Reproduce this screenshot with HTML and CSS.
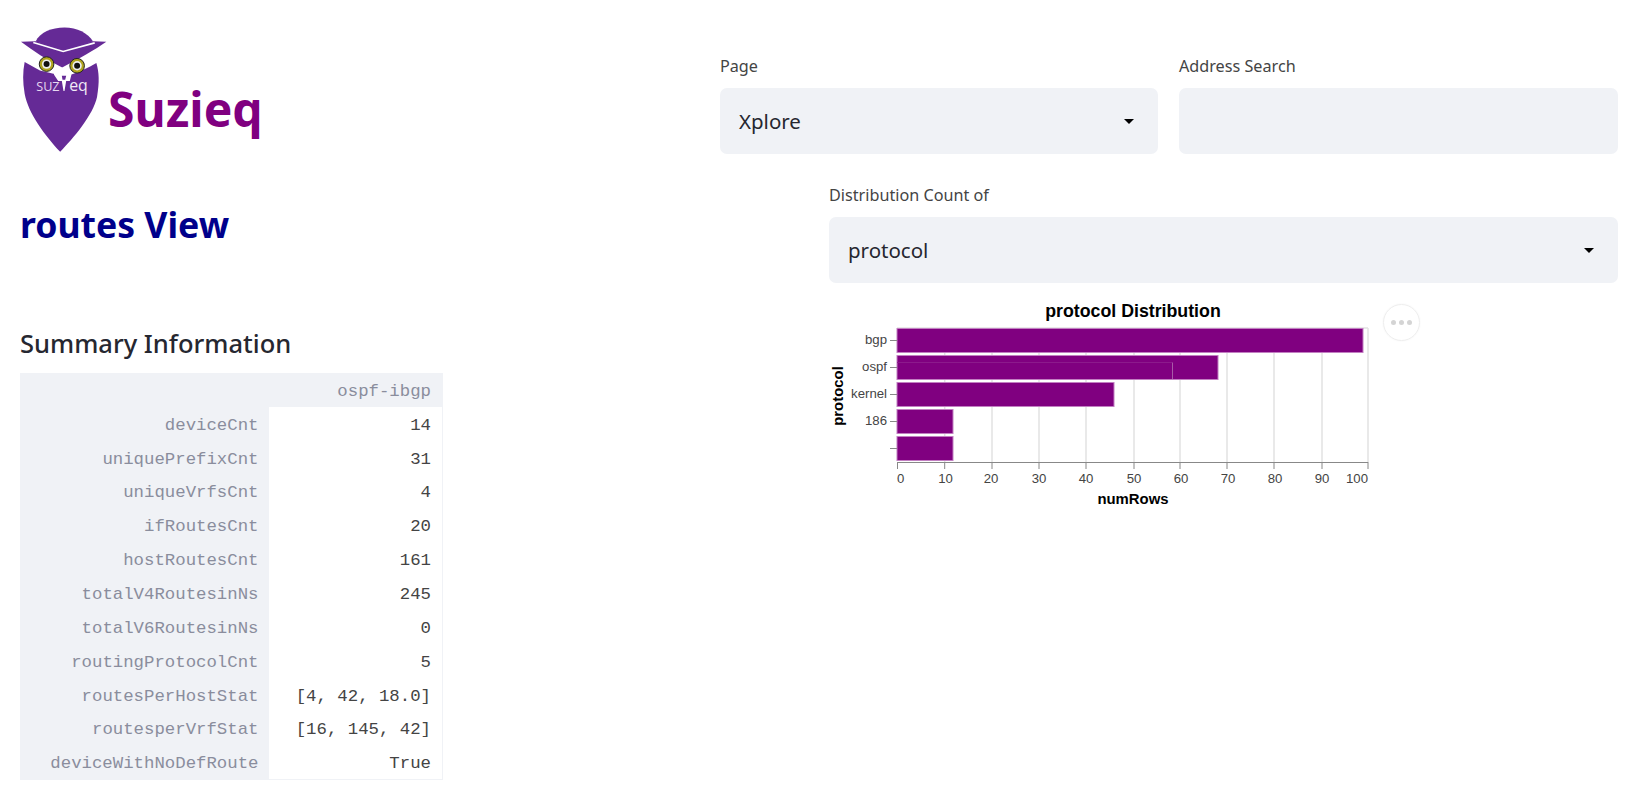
FILE: index.html
```html
<!DOCTYPE html>
<html lang="en">
<head>
    <meta charset="UTF-8">
    <meta name="viewport" content="width=device-width, initial-scale=1.0">
    <title>Suzieq</title>
    <link rel="stylesheet" href="styles.css">
</head>
<body>
    <div class="main">
        <div class="top-row">
            <div class="brand">
                <svg class="logo" viewBox="60 50 262 378" width="87" height="126">
                    <path class="logo-purple" d="M74 155 L120 180 L170 192 L215 192 C240 185 265 172 290 158 C298 185 300 215 292 260 C280 315 220 385 181 425 C135 375 85 310 74 250 C68 215 68 185 74 155 Z"/>
                    <path class="logo-purple" d="M107 93 C120 66 155 51 194 51 C232 51 265 68 280 93 L190 118 Z"/>
                    <path class="logo-purple" d="M63 94 L107 92 L190 112 L280 92 L320 94 C285 118 240 145 187 171 C140 148 100 122 63 94 Z"/>
                    <path class="logo-line" d="M100 96 L190 123 L285 97"/>
                    <path class="logo-white" d="M170 172 L205 172 L215 192 L210 212 L199 212 L194 242 L191 242 L186 212 L175 212 L162 192 Z"/>
                    <path class="logo-purple" d="M186 196 L199 196 L196 208 L188 208 Z"/>
                    <circle class="eye-ring" cx="140" cy="161" r="22"/>
                    <circle class="eye-white" cx="140" cy="161" r="14"/>
                    <circle class="eye-pupil" cx="140" cy="161" r="9"/>
                    <circle class="eye-ring" cx="232" cy="166" r="22"/>
                    <circle class="eye-white" cx="232" cy="166" r="14"/>
                    <circle class="eye-pupil" cx="232" cy="166" r="9"/>
                    <text class="logo-text" x="109" y="243">SUZ</text>
                    <text class="logo-text logo-text-big" x="208" y="243">eq</text>
                </svg>
                <h1 class="brand-name">Suzieq</h1>
            </div>
            <div class="select-pair">
                <div class="form-group">
                    <label>Page</label>
                    <div class="select-box">
                        <span>Xplore</span>
                        <span class="caret"></span>
                    </div>
                </div>
                <div class="form-group">
                    <label>Address Search</label>
                    <div class="select-box"></div>
                </div>
            </div>
        </div>

        <div class="bottom-row">
            <div class="left-col">
                <h2 class="view-title">routes View</h2>
                <h3 class="summary-title">Summary Information</h3>
                <table class="summary">
                    <tr><th></th><th class="col-head">ospf-ibgp</th></tr>
                    <tr><th>deviceCnt</th><td>14</td></tr>
                    <tr><th>uniquePrefixCnt</th><td>31</td></tr>
                    <tr><th>uniqueVrfsCnt</th><td>4</td></tr>
                    <tr><th>ifRoutesCnt</th><td>20</td></tr>
                    <tr><th>hostRoutesCnt</th><td>161</td></tr>
                    <tr><th>totalV4RoutesinNs</th><td>245</td></tr>
                    <tr><th>totalV6RoutesinNs</th><td>0</td></tr>
                    <tr><th>routingProtocolCnt</th><td>5</td></tr>
                    <tr><th>routesPerHostStat</th><td>[4, 42, 18.0]</td></tr>
                    <tr><th>routesperVrfStat</th><td>[16, 145, 42]</td></tr>
                    <tr><th>deviceWithNoDefRoute</th><td>True</td></tr>
                </table>
            </div>
            <div class="right-col">
                <div class="form-group">
                    <label>Distribution Count of</label>
                    <div class="select-box">
                        <span>protocol</span>
                        <span class="caret"></span>
                    </div>
                </div>
                <div class="chart-wrap">
                    <svg class="chart" viewBox="0 0 545 210" width="545" height="210">
                        <text class="chart-title" x="303" y="17">protocol Distribution</text>

                        <g class="grid-lines">
                            <path d="M114.7 28V162M162 28V162M209 28V162M256 28V162M304 28V162M350 28V162M397 28V162M444 28V162M492 28V162M538 28V162"/>
                            <path d="M67 28H538"/>
                        </g>

                        <g class="bars">
                            <rect x="67" y="28.5" width="466" height="24"/>
                            <rect x="67" y="55.5" width="321" height="24"/>
                            <rect x="67" y="82.5" width="217" height="24"/>
                            <rect x="67" y="109.5" width="56" height="24"/>
                            <rect x="67" y="136.5" width="56" height="24"/>
                        </g>
                        <path class="bar-inner-top" d="M67 62.5H342"/>
                        <path class="bar-inner-end" d="M342.5 62.5V79"/>

                        <g class="axis">
                            <path d="M67 162.5H538"/>
                            <path d="M60 40.5H67M60 67.5H67M60 94.5H67M60 121.5H67M60 148.5H67"/>
                            <path d="M67.5 162V169M114.7 162V169M162 162V169M209 162V169M256 162V169M304 162V169M350 162V169M397 162V169M444 162V169M492 162V169M538 162V169"/>
                        </g>

                        <g class="tick-y">
                            <text x="57" y="44">bgp</text>
                            <text x="57" y="71">ospf</text>
                            <text x="57" y="98">kernel</text>
                            <text x="57" y="125">186</text>
                        </g>
                        <g class="tick-x">
                            <text x="67" y="183" class="tick-start">0</text>
                            <text x="115.5" y="183">10</text>
                            <text x="161" y="183">20</text>
                            <text x="209" y="183">30</text>
                            <text x="256" y="183">40</text>
                            <text x="304" y="183">50</text>
                            <text x="351" y="183">60</text>
                            <text x="398" y="183">70</text>
                            <text x="445" y="183">80</text>
                            <text x="492" y="183">90</text>
                            <text x="538" y="183" class="tick-end">100</text>
                        </g>
                        <text class="axis-title" x="303" y="204">numRows</text>
                        <text class="axis-title" transform="translate(13 96) rotate(-90)">protocol</text>
                    </svg>
                    <div class="more-btn"><span></span><span></span><span></span></div>
                </div>
            </div>
        </div>
    </div>
</body>
</html>
```

FILE: styles.css
```css
body {
    margin: 0;
    padding: 0;
    background: #fff;
    color: #262730;
    font-family: "Noto Sans", "Open Sans", Arial, sans-serif;
}

.main {
    padding: 27px 15px 0 20px;
}

.top-row {
    display: grid;
    grid-template-columns: 1fr 898px;
    height: 143px;
}

.brand {
    display: flex;
    align-items: flex-start;
    gap: 1px;
}

.logo {
    display: block;
}

.logo-purple {
    fill: #652a96;
}

.logo-white {
    fill: #fff;
}

.logo-line {
    fill: none;
    stroke: #fff;
    stroke-width: 5;
}

.eye-ring {
    fill: #b0a41e;
    stroke: #222;
    stroke-width: 3;
}

.eye-white {
    fill: #eee;
}

.eye-pupil {
    fill: #111;
}

.logo-text {
    fill: #e6d8f0;
    font-family: "Open Sans", sans-serif;
    font-size: 38px;
}

.logo-text-big {
    font-size: 48px;
    fill: #f2ecf7;
}

.brand-name {
    margin: 49px 0 0;
    font-size: 48px;
    line-height: 66px;
    font-weight: 700;
    color: #800080;
}

.select-pair {
    display: grid;
    grid-template-columns: 438px 439px;
    gap: 21px;
    padding-top: 27px;
}

.form-group label {
    display: block;
    font-size: 16.2px;
    line-height: 24px;
    color: #444;
    margin-bottom: 10px;
}

.select-box {
    display: flex;
    justify-content: space-between;
    align-items: center;
    height: 66px;
    padding: 0 24px 0 19px;
    background: #f0f2f6;
    border-radius: 7px;
    font-size: 20.5px;
    color: #262730;
}

.caret {
    width: 0;
    height: 0;
    border-left: 5px solid transparent;
    border-right: 5px solid transparent;
    border-top: 5px solid #000;
}

.bottom-row {
    display: grid;
    grid-template-columns: 1fr 789px;
}

.left-col {
    padding-top: 31px;
}

.view-title {
    margin: 0;
    font-size: 35.6px;
    line-height: 46px;
    font-weight: 700;
    color: #00008b;
}

.summary-title {
    margin: 79px 0 13px;
    font-size: 25.5px;
    line-height: 34px;
    font-weight: 500;
    color: #262730;
}

.summary {
    table-layout: fixed;
    border-collapse: collapse;
    border: 1px solid #f0f2f6;
    width: 423px;
    font-family: "Liberation Mono", "DejaVu Sans Mono", monospace;
    font-size: 17.35px;
}

.summary th,
.summary td {
    height: 33.85px;
    padding: 2px 11px 0 0;
    text-align: right;
    font-weight: 400;
    box-sizing: border-box;
}

.summary th {
    width: 248px;
    padding-right: 10px;
    background: #f0f2f6;
    color: #8a8d9d;
}

.summary .col-head {
    width: auto;
    padding-right: 11px;
}

.summary td {
    color: #444;
}

.right-col {
    min-width: 0;
    padding-top: 13px;
}

.chart-wrap {
    display: flex;
    align-items: flex-start;
    margin: 17px 0 0 1px;
}

.chart {
    display: block;
}

.chart-title {
    font-family: "Liberation Sans", Arial, sans-serif;
    font-size: 17.75px;
    font-weight: 700;
    fill: #000;
    text-anchor: middle;
}

.grid-lines path {
    fill: none;
    stroke: #e2e2e2;
    stroke-width: 1.5;
}

.bars rect {
    fill: #800080;
    stroke: #c27fc2;
    stroke-width: 1;
}

.bar-inner-top {
    fill: none;
    stroke: #8c1a8c;
    stroke-width: 1;
}

.bar-inner-end {
    fill: none;
    stroke: #a85aa8;
    stroke-width: 1;
}

.axis path {
    fill: none;
    stroke: #888;
    stroke-width: 1;
}

.tick-y text,
.tick-x text {
    font-family: "Liberation Sans", Arial, sans-serif;
    font-size: 13.2px;
    fill: #444;
}

.tick-y text {
    text-anchor: end;
}

.tick-x text {
    text-anchor: middle;
}

.tick-x .tick-start {
    text-anchor: start;
}

.tick-x .tick-end {
    text-anchor: end;
}

.axis-title {
    font-family: "Liberation Sans", Arial, sans-serif;
    font-size: 14.9px;
    font-weight: 700;
    fill: #000;
    text-anchor: middle;
}

.more-btn {
    display: flex;
    align-items: center;
    justify-content: center;
    gap: 3px;
    width: 37px;
    height: 37px;
    margin: 4px 0 0 8px;
    border: 1px solid #eee;
    border-radius: 50%;
    box-sizing: border-box;
    box-shadow: 0 0 2px rgba(0, 0, 0, 0.05);
}

.more-btn span {
    width: 5px;
    height: 5px;
    border-radius: 50%;
    background: #d4d4d4;
}
```
